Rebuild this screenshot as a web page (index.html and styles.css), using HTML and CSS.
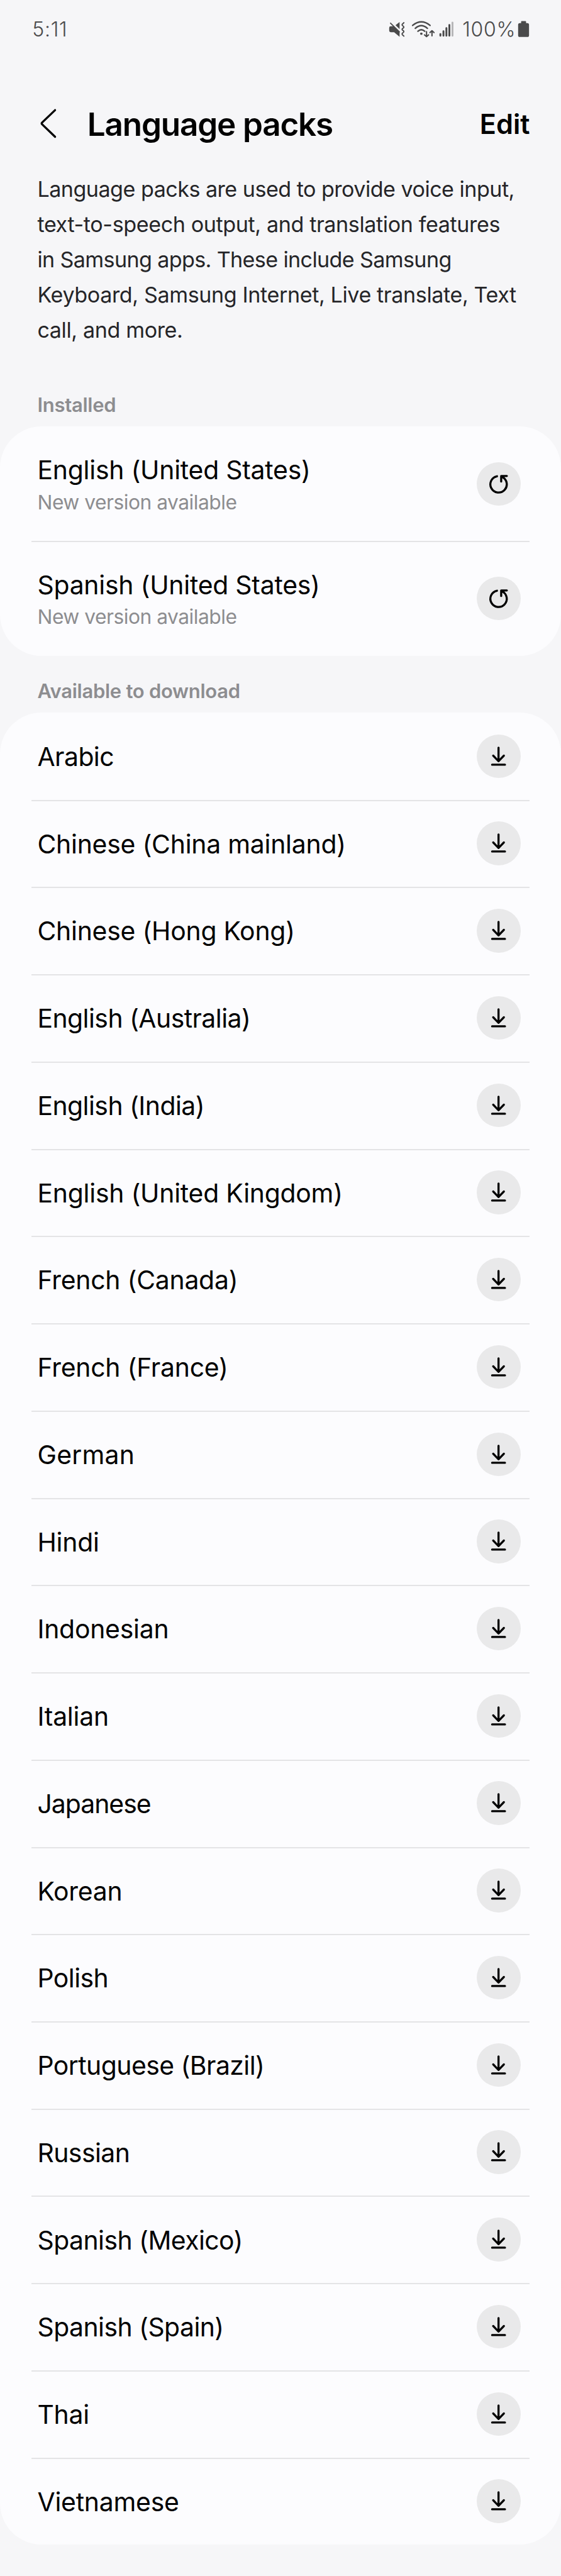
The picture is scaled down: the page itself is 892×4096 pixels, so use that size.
FILE: index.html
```html
<!DOCTYPE html>
<html lang="en">
<head>
<meta charset="utf-8">
<title>Language packs</title>
<link rel="stylesheet" href="styles.css">
</head>
<body>
<svg class="sprite" aria-hidden="true">
  <symbol id="download" viewBox="0 0 84 84"><path d="M42 25.2V51M31.7 40.6 42 51.2 52.3 40.6M29.6 58H54.4"/></symbol>
  <symbol id="refresh" viewBox="0 0 84 84"><path d="M39 27A15.8 15.8 0 1 0 49 28.3M58 26.4H47.1V37.2M47.8 27.2 53 31"/></symbol>
</svg>
<div class="screen">
  <div class="status">
    <span class="clock">5:11</span>
    <svg class="mute" viewBox="748 38 32 36"><path class="fill" d="M752 51H757.5L769 62V71.3L758.5 62.4H752A3 3 0 0 1 749 59.4V54A3 3 0 0 1 752 51ZM769 42.8V56.6L761.2 49Z"/><path d="M751.6 45 768.6 61.8" stroke-width="2.2"/><path d="M777.2 44.2C776 46 773.8 46.5 773.8 48.3S777.2 50.8 777.2 52.7 773.8 55 773.8 57 777.2 59.2 777.2 61.2 773.8 63.8 773.8 65.8 776 68.4 777.2 70" stroke-width="2.4"/></svg>
    <svg class="wifi" viewBox="792 38 46 36"><path d="M794.5 49.4Q811.3 35.8 828.1 49.4M799.6 55Q811.3 44.8 823 55M804.8 60.6Q811.3 54.6 817.8 60.6" stroke-width="2.8"/><circle class="fill" cx="811.3" cy="65.4" r="2.4"/><path d="M821.3 61.5V70.8M817.4 67.6 821.3 71 825.2 67.6M831.8 69.6V60M827.9 63.2 831.8 59.6 835.7 63.2" stroke-width="2.5"/></svg>
    <svg class="signal" viewBox="845 38 28 36"><path d="M847.7 66V69.3M853.6 60.6V69.3M859.3 54.6V69.3M865 48.6V69.3" stroke-width="3.6"/><path class="weak" d="M871 44V69.3" stroke-width="3.6"/></svg>
    <span class="percent">100%</span>
    <svg class="battery" viewBox="996 38 23 36"><path class="fill" d="M1004 41H1011Q1012.3 41 1012.3 42.3V45H1014.8Q1018 45 1018 48.2V68.5Q1018 71.7 1014.8 71.7H1000.2Q997 71.7 997 68.5V48.2Q997 45 1000.2 45H1002.7V42.3Q1002.7 41 1004 41Z"/></svg>
  </div>

  <header class="header">
    <svg class="back" viewBox="70 200 50 76"><path d="M105.8 212.2 80.8 236.2Q79.2 238 80.8 239.6L105.8 263.6" stroke-width="4"/></svg>
    <h1 class="title">Language packs</h1>
    <span class="edit">Edit</span>
  </header>

  <p class="intro"><span class="snug">Language packs are used to provide voice input,</span><br>text-to-speech output, and translation features<br><span class="snugger">in Samsung apps. These include Samsung</span><br>Keyboard, Samsung Internet, Live translate, Text<br>call, and more.</p>

  <h2 class="section first">Installed</h2>
  <ul class="card installed">
    <li><div><p class="name">English (United States)</p><p class="note">New version available</p></div><svg class="action"><use href="#refresh"/></svg></li>
    <li><div><p class="name">Spanish (United States)</p><p class="note">New version available</p></div><svg class="action"><use href="#refresh"/></svg></li>
  </ul>

  <h2 class="section second">Available to download</h2>
  <ul class="card available">
    <li><p class="name tight">Arabic</p><svg class="action"><use href="#download"/></svg></li>
    <li><p class="name">Chinese (China mainland)</p><svg class="action"><use href="#download"/></svg></li>
    <li><p class="name">Chinese (Hong Kong)</p><svg class="action"><use href="#download"/></svg></li>
    <li><p class="name tight">English (Australia)</p><svg class="action"><use href="#download"/></svg></li>
    <li><p class="name tight">English (India)</p><svg class="action"><use href="#download"/></svg></li>
    <li><p class="name">English (United Kingdom)</p><svg class="action"><use href="#download"/></svg></li>
    <li><p class="name">French (Canada)</p><svg class="action"><use href="#download"/></svg></li>
    <li><p class="name">French (France)</p><svg class="action"><use href="#download"/></svg></li>
    <li><p class="name loose">German</p><svg class="action"><use href="#download"/></svg></li>
    <li><p class="name">Hindi</p><svg class="action"><use href="#download"/></svg></li>
    <li><p class="name">Indonesian</p><svg class="action"><use href="#download"/></svg></li>
    <li><p class="name">Italian</p><svg class="action"><use href="#download"/></svg></li>
    <li><p class="name tighter">Japanese</p><svg class="action"><use href="#download"/></svg></li>
    <li><p class="name">Korean</p><svg class="action"><use href="#download"/></svg></li>
    <li><p class="name tight">Polish</p><svg class="action"><use href="#download"/></svg></li>
    <li><p class="name tight">Portuguese (Brazil)</p><svg class="action"><use href="#download"/></svg></li>
    <li><p class="name tight">Russian</p><svg class="action"><use href="#download"/></svg></li>
    <li><p class="name tight">Spanish (Mexico)</p><svg class="action"><use href="#download"/></svg></li>
    <li><p class="name tight">Spanish (Spain)</p><svg class="action"><use href="#download"/></svg></li>
    <li><p class="name">Thai</p><svg class="action"><use href="#download"/></svg></li>
    <li><p class="name">Vietnamese</p><svg class="action"><use href="#download"/></svg></li>
  </ul>
</div>
</body>
</html>
```
FILE: styles.css
```css
/* 1rem = 100 device pixels of a 1080-wide phone screen */
html { font-size: 82.58px; background: #f6f6f8; }
* { box-sizing: border-box; margin: 0; padding: 0; }
body { font-family: Inter, "Open Sans", sans-serif; font-size: .4rem; color: #000; }
svg { display: block; flex: none; fill: none; stroke: currentColor; stroke-linecap: round; stroke-linejoin: round; }
.fill { fill: currentColor; stroke: none; }
.sprite { width: 0; height: 0; position: absolute; }
.screen { height: 49.6rem; overflow: hidden; white-space: nowrap; }

.status { display: flex; align-items: center; height: 1.14rem; padding: 0 .61rem 0 .62rem; color: #4a4a4b; line-height: 1.14rem; }
.status svg { height: .36rem; margin-top: -.02rem; }
.clock { flex: 1; font-size: .388rem; font-weight: 350; letter-spacing: .022em; }
.mute { width: .32rem; }
.wifi { width: .46rem; margin-left: .12rem; }
.signal { width: .28rem; margin-left: .07rem; }
.weak { stroke: #b5b5b7; }
.percent { width: 1.23rem; padding-right: .03rem; text-align: right; font-size: .388rem; font-weight: 350; letter-spacing: .022em; }
.battery { width: .23rem; }

.header { display: flex; align-items: center; height: 2.16rem; padding: .32rem .6rem 0 .7rem; }
.back { width: .5rem; height: .76rem; }
.title { flex: 1; margin-left: .48rem; font-size: .62rem; font-weight: 620; letter-spacing: -.0225em; }
.edit { padding-top: .02rem; font-size: .523rem; font-weight: 620; }

.intro { padding-left: .72rem; font-size: .413rem; line-height: .68rem; letter-spacing: -.0115em; color: #252528; }
.snug { letter-spacing: -.0152em; }
.snugger { letter-spacing: -.0185em; }

.section { padding-left: .72rem; font-size: .375rem; line-height: .5rem; font-weight: 600; letter-spacing: -.0085em; color: #8d8d90; }
.first { margin: .84rem 0 .17rem; }
.second { margin: .425rem 0 .165rem; }

.card { list-style: none; padding: 0 .6rem; border-radius: .8rem; background: #fcfcfe; }
.card li { display: flex; align-items: center; justify-content: space-between; padding: 0 .18rem 0 .12rem; }
.card li + li { background: linear-gradient(#e4e4e6, #e4e4e6) 0 0 / 100% .03rem no-repeat; }
.installed li { height: 2.21rem; }
.available li { height: 1.68rem; }
.name { font-size: .495rem; line-height: .6rem; letter-spacing: -.0055em; }
.tight { letter-spacing: -.013em; }
.tighter { letter-spacing: -.024em; }
.loose { letter-spacing: .006em; }
.available .name { padding-top: .035rem; }
.installed .name { padding-top: .065rem; }
.note { margin-top: .06rem; font-size: .385rem; line-height: .52rem; letter-spacing: -.016em; color: #8d8d90; }
.action { width: .84rem; height: .84rem; border-radius: 50%; background: #e9e9ea; stroke-width: 4; }
```
